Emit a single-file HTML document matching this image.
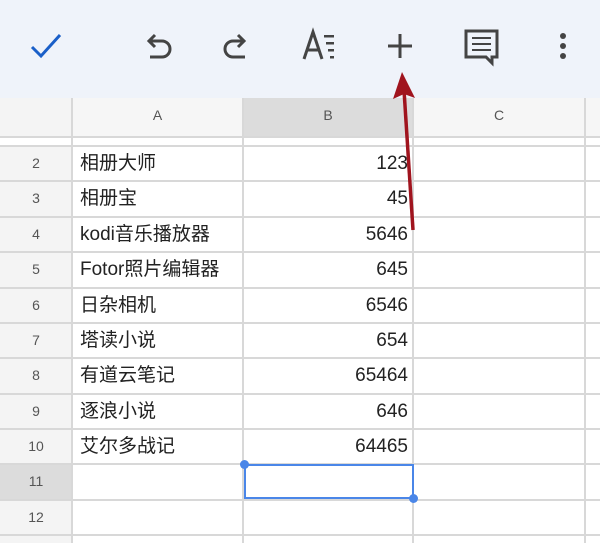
<!DOCTYPE html><html><head><meta charset="utf-8"><style>
body{margin:0;width:600px;height:543px;overflow:hidden;background:#fff;font-family:"Liberation Sans","Noto Sans CJK SC",sans-serif;position:relative}
.tb{position:absolute;left:0;top:0;width:600px;height:98px;background:#eff3fa}
.abs{position:absolute}
.hl{position:absolute;left:0;width:600px;height:2px;background:#d8d8d8}
.vl{position:absolute;top:98px;width:2px;height:445px;background:#d8d8d8}
.rn{position:absolute;left:0;width:72px;text-align:center;font-size:14px;color:#555;background:#f4f4f4}
.a,.b{position:absolute;height:35px;line-height:35px;font-size:19px;color:#222;white-space:nowrap}
.a{left:80px}
.b{left:243px;width:165px;text-align:right;font-family:"Liberation Sans",sans-serif}
</style></head><body>
<div class="tb"></div>
<svg class="abs" style="left:0;top:0" width="600" height="98">
<path d="M32 47 L41 56 L60 35" fill="none" stroke="#1a5fc8" stroke-width="3"/>
<g fill="none" stroke="#444" stroke-width="3">
<path d="M150 41 h12 a8 8 0 0 1 0 16 h-12"/><path d="M155 35 L149 41 L155 47"/>
<path d="M243 41 h-10 a8 8 0 0 0 0 16 h12"/><path d="M238 35 L244 41 L238 47"/>
<path d="M388 46 h24 M400 34 v24"/>
<path d="M466 31 h31 v26 h-5 v6 l-6 -6 h-20 z"/>
<path d="M472 38 h19 M472 44 h19 M472 50 h19" stroke-width="2"/>
<path d="M304 59 L313 32 L322 59 M307 50 h12" stroke-width="3"/>
</g>
<g fill="#444"><rect x="324" y="35" width="10" height="2.5"/><rect x="326" y="42" width="8" height="2.5"/><rect x="328" y="49" width="6" height="2.5"/><rect x="330" y="56" width="4" height="2.5"/>
<circle cx="563" cy="36" r="3"/><circle cx="563" cy="46" r="3"/><circle cx="563" cy="56" r="3"/></g>
</svg>
<div class="abs" style="left:0;top:98px;width:72px;height:39px;background:#f4f4f4"></div>
<div class="abs" style="left:72px;top:98px;width:171px;height:39px;background:#f6f6f6"></div>
<div class="abs" style="left:243px;top:98px;width:170px;height:39px;background:#dcdcdc"></div>
<div class="abs" style="left:413px;top:98px;width:187px;height:39px;background:#f6f6f6"></div>
<div class="abs" style="left:72px;top:107px;width:171px;text-align:center;font-size:14px;color:#555">A</div>
<div class="abs" style="left:243px;top:107px;width:170px;text-align:center;font-size:14px;color:#555">B</div>
<div class="abs" style="left:413px;top:107px;width:172px;text-align:center;font-size:14px;color:#555">C</div>
<div class="hl" style="top:136px"></div>
<div class="rn" style="top:145px;height:398px"></div>
<div class="rn" style="top:464px;height:35px;background:#dcdcdc"></div>
<div class="hl" style="top:145px"></div><div class="hl" style="top:180px"></div><div class="hl" style="top:216px"></div><div class="hl" style="top:251px"></div><div class="hl" style="top:287px"></div><div class="hl" style="top:322px"></div><div class="hl" style="top:357px"></div><div class="hl" style="top:393px"></div><div class="hl" style="top:428px"></div><div class="hl" style="top:463px"></div><div class="hl" style="top:499px"></div><div class="hl" style="top:534px"></div>
<div class="vl" style="left:71px"></div><div class="vl" style="left:242px"></div><div class="vl" style="left:412px"></div><div class="vl" style="left:584px"></div>
<div class="rn" style="top:155px;background:none">2</div><div class="rn" style="top:190px;background:none">3</div><div class="rn" style="top:226px;background:none">4</div><div class="rn" style="top:261px;background:none">5</div><div class="rn" style="top:297px;background:none">6</div><div class="rn" style="top:332px;background:none">7</div><div class="rn" style="top:367px;background:none">8</div><div class="rn" style="top:403px;background:none">9</div><div class="rn" style="top:438px;background:none">10</div><div class="rn" style="top:473px;background:none">11</div><div class="rn" style="top:509px;background:none">12</div>
<div class="a" style="top:146px">相册大师</div><div class="b" style="top:146px">123</div>
<div class="a" style="top:181px">相册宝</div><div class="b" style="top:181px">45</div>
<div class="a" style="top:217px">kodi音乐播放器</div><div class="b" style="top:217px">5646</div>
<div class="a" style="top:252px">Fotor照片编辑器</div><div class="b" style="top:252px">645</div>
<div class="a" style="top:288px">日杂相机</div><div class="b" style="top:288px">6546</div>
<div class="a" style="top:323px">塔读小说</div><div class="b" style="top:323px">654</div>
<div class="a" style="top:358px">有道云笔记</div><div class="b" style="top:358px">65464</div>
<div class="a" style="top:394px">逐浪小说</div><div class="b" style="top:394px">646</div>
<div class="a" style="top:429px">艾尔多战记</div><div class="b" style="top:429px">64465</div>
<div class="abs" style="left:244px;top:464px;width:166px;height:31px;border:2px solid #4a86e8"></div>
<div class="abs" style="left:240px;top:460px;width:9px;height:9px;border-radius:50%;background:#4a86e8"></div>
<div class="abs" style="left:409px;top:494px;width:9px;height:9px;border-radius:50%;background:#4a86e8"></div>
<svg class="abs" style="left:0;top:0" width="600" height="543">
<path d="M413 230 L404 90" stroke="#a0141e" stroke-width="3.5" fill="none"/>
<path d="M402 72 L393 99 L404 94 L415 98 Z" fill="#a0141e"/>
</svg>
</body></html>
